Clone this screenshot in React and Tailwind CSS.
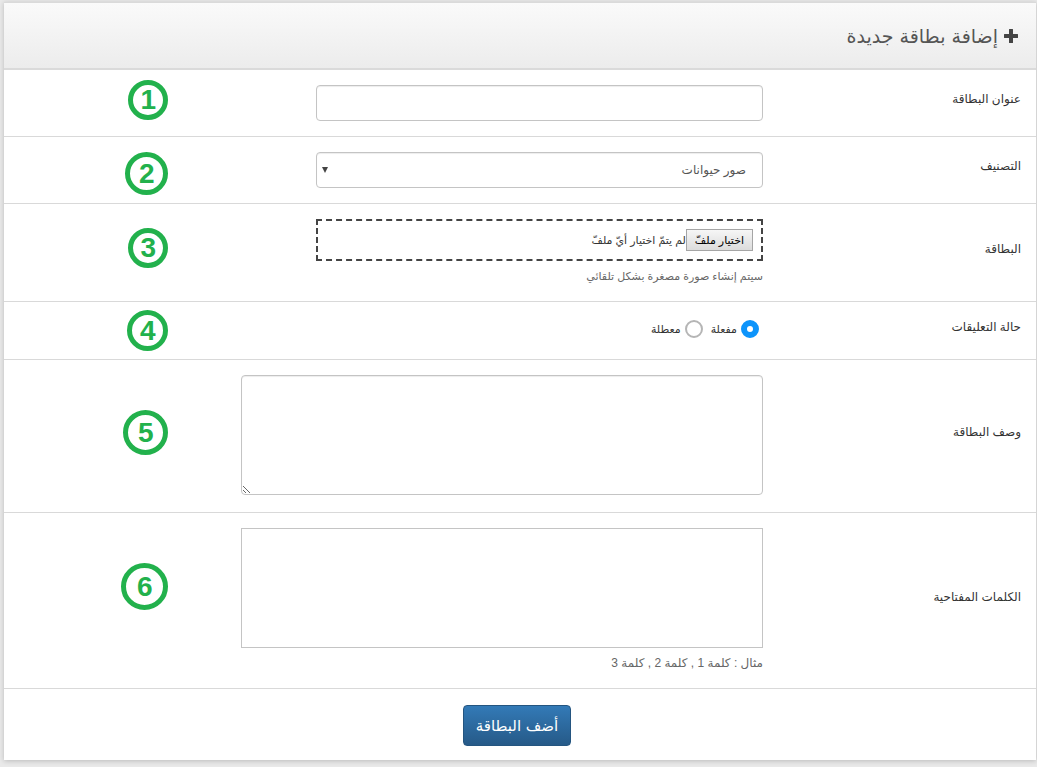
import React, { useState } from 'react'

const INPUT = 'rounded border border-[#c4c4c4] bg-white text-xs text-[#555] shadow-[inset_0_1px_1px_rgba(0,0,0,0.075)]'

function Marker({ number, className }) {
  return (
    <div className={`flex shrink-0 items-center justify-center rounded-full border-5 border-[#22b14c] font-['Liberation_Sans',sans-serif] text-[28px] leading-none font-bold text-[#22b14c] ${className}`}>
      {number}
    </div>
  )
}

function Row({ label, htmlFor, number, marker, children }) {
  return (
    <div className="flex border-b border-[#d9d9d9]">
      <div className="flex w-1/4 items-center px-[15px] pb-2 text-[#333]">
        <label htmlFor={htmlFor} id={`${htmlFor}-label`}>{label}</label>
      </div>
      <div className="w-[52%] py-[15px] pr-[15px]">{children}</div>
      <div className="flex flex-1 items-start pr-[73px]">
        <Marker number={number} className={marker} />
      </div>
    </div>
  )
}

export default function App() {
  const [title, setTitle] = useState('')
  const [category, setCategory] = useState('animals')
  const [fileName, setFileName] = useState('')
  const [comments, setComments] = useState('on')
  const [description, setDescription] = useState('')
  const [keywords, setKeywords] = useState('')

  const radioClass = 'm-0 size-[18px] cursor-pointer appearance-none rounded-full border-2 border-[#b5b5b5] bg-white checked:border-6 checked:border-[#0d94fb]'

  return (
    <div dir="rtl" lang="ar" className="bg-[#e9e9e9] pt-0.5 pr-px pb-[7px] pl-1 font-['Liberation_Sans','DejaVu_Sans',sans-serif] text-xs leading-5">
      <form className="bg-white shadow-[0_1px_5px_rgba(0,0,0,0.2)]" onSubmit={e => e.preventDefault()}>
        <header className="flex h-[68px] items-center gap-1.5 border-t border-b-2 border-[#dadada] bg-linear-to-b from-[#fafafa] to-[#ececec] px-[18px] text-[#444]">
          <svg viewBox="0 0 14 14" className="size-3.5" fill="currentColor" aria-hidden="true">
            <path d="M5 .5Q5 0 5.5 0h3Q9 0 9 .5V5h4.500q.5 0 .5.500v3q0 .5-.5.500H9v4.500q0 .5-.5.500h-3q-.5 0-.5-.5V9H.5Q0 9 0 8.500v-3Q0 5 .5 5H5z" />
          </svg>
          <h1 className="font-['DejaVu_Sans',sans-serif] text-[19px] text-[#555]">إضافة بطاقة جديدة</h1>
        </header>

        <Row label="عنوان البطاقة" htmlFor="title" number="1" marker="mt-2.5 size-10">
          <input
            id="title"
            type="text"
            className={`block h-9 w-6/7 px-3 ${INPUT}`}
            value={title}
            onChange={e => setTitle(e.target.value)}
          />
        </Row>

        <Row label="التصنيف" htmlFor="category" number="2" marker="mt-[15px] size-[43px]">
          <div className="relative w-6/7">
            <select
              id="category"
              className={`block h-9 w-full appearance-none px-4 ${INPUT}`}
              value={category}
              onChange={e => setCategory(e.target.value)}
            >
              <option value="animals">صور حيوانات</option>
            </select>
            <svg viewBox="0 0 6 6" className="pointer-events-none absolute top-[15px] left-1.5 size-1.5" fill="#444" aria-hidden="true">
              <path d="M0 0h6L3 6z" />
            </svg>
          </div>
        </Row>

        <Row label="البطاقة" htmlFor="file" number="3" marker="mt-6 size-10">
          <div className="flex h-[42px] w-6/7 items-center border-2 border-dashed border-[#444] px-2 text-[11px] leading-5 text-[#333]">
            <input
              id="file"
              type="file"
              className="sr-only"
              onChange={e => setFileName(e.target.files[0] ? e.target.files[0].name : '')}
            />
            <label htmlFor="file" className="flex cursor-pointer items-center">
              <span className="border border-[#a5a5a5] bg-linear-to-b from-[#f6f6f6] to-[#dcdcdc] px-2 text-black">اختيار ملفّ</span>
              <span>{fileName || 'لم يتمّ اختيار أيّ ملفّ'}</span>
            </label>
          </div>
          <p className="mt-[5px] text-[11px] leading-5 text-[#666]">سيتم إنشاء صورة مصغرة بشكل تلقائي</p>
        </Row>

        <Row label="حالة التعليقات" htmlFor="comments" number="4" marker="mt-2 size-[41px]">
          <div role="radiogroup" aria-labelledby="comments-label" className="flex h-[27px] items-center gap-2 px-1 pb-1 text-[11px] text-[#333]">
            <label className="flex items-center gap-1">
              <input
                id="comments"
                type="radio"
                name="comments"
                className={radioClass}
                checked={comments === 'on'}
                onChange={() => setComments('on')}
              />
              مفعلة
            </label>
            <label className="flex items-center gap-1">
              <input
                type="radio"
                name="comments"
                className={radioClass}
                checked={comments === 'off'}
                onChange={() => setComments('off')}
              />
              معطلة
            </label>
          </div>
        </Row>

        <Row label="وصف البطاقة" htmlFor="description" number="5" marker="mt-[50px] size-[45px]">
          <textarea
            id="description"
            className={`mb-0.5 block h-[120px] w-full px-3 py-1.5 ${INPUT}`}
            value={description}
            onChange={e => setDescription(e.target.value)}
          />
        </Row>

        <Row label="الكلمات المفتاحية" htmlFor="keywords" number="6" marker="mt-[50px] size-[47px]">
          <textarea
            id="keywords"
            className="block h-[120px] w-full resize-none border border-[#c4c4c4] bg-white p-1.5 text-[#555]"
            value={keywords}
            onChange={e => setKeywords(e.target.value)}
          />
          <p className="mt-[5px] text-xs leading-5 text-[#666]">مثال : كلمة 1 , كلمة 2 , كلمة 3</p>
        </Row>

        <div className="flex justify-center pt-4 pr-1.5 pb-3.5">
          <button
            type="submit"
            className="h-[41px] rounded border border-[#245580] bg-linear-to-b from-[#337ab7] to-[#265a88] px-3 font-['DejaVu_Sans',sans-serif] text-[15px] font-medium text-white"
          >
            أضف البطاقة
          </button>
        </div>
      </form>
    </div>
  )
}
